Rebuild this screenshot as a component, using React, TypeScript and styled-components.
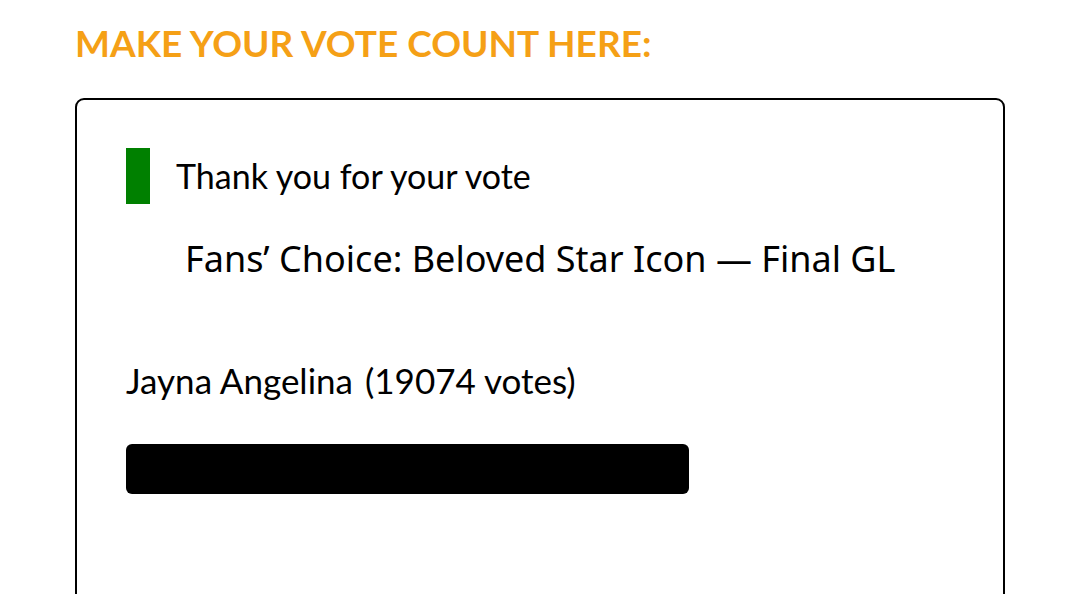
import React from 'react';
import styled, { createGlobalStyle } from 'styled-components';

const GlobalStyle = createGlobalStyle`
  html, body {
    margin: 0;
    padding: 0;
    background: #fff;
    font-family: Lato, "Liberation Sans", sans-serif;
    color: #000;
  }
`;

const Page = styled.div`
  padding: 21px 75px 0 75px;
  width: 930px;
`;

const Heading = styled.h2`
  margin: 0 0 33px 0;
  font-family: Lato, sans-serif;
  font-weight: 700;
  font-size: 37px;
  line-height: 44px;
  color: #f5a016;
`;

const Card = styled.div`
  border: 2px solid #000;
  border-radius: 9px;
  padding: 48px 50px 100px 49px;
  height: 600px;
`;

const Notice = styled.div`
  display: flex;
  align-items: center;
  gap: 26px;
`;

const Marker = styled.span`
  width: 24px;
  height: 56px;
  background: #008000;
  flex-shrink: 0;
`;

const NoticeText = styled.span`
  font-size: 34px;
  line-height: normal;
  margin-top: -2px;
`;

const PollTitle = styled.div`
  margin: 30px 0 0 59px;
  font-family: "Noto Sans", sans-serif;
  font-size: 36px;
  line-height: normal;
`;

const Result = styled.div`
  margin-top: 76px;
  font-size: 35px;
  line-height: normal;
  display: flex;
  gap: 12px;
`;

const Track = styled.div`
  margin-top: 43px;
  width: 100%;
`;

const Bar = styled.div`
  height: 50px;
  background: #000;
  border-radius: 6px;
`;

export default function App() {
  const pct = 562 / 826;
  return (
    <>
      <GlobalStyle />
      <Page>
        <Heading>MAKE YOUR VOTE COUNT HERE:</Heading>
        <Card>
          <Notice>
            <Marker />
            <NoticeText>Thank you for your vote</NoticeText>
          </Notice>
          <PollTitle>Fans’ Choice: Beloved Star Icon — Final GL</PollTitle>
          <Result>
            <span>Jayna Angelina</span>
            <span>(19074 votes)</span>
          </Result>
          <Track>
            <Bar style={{ width: `${pct * 100}%` }} />
          </Track>
        </Card>
      </Page>
    </>
  );
}
